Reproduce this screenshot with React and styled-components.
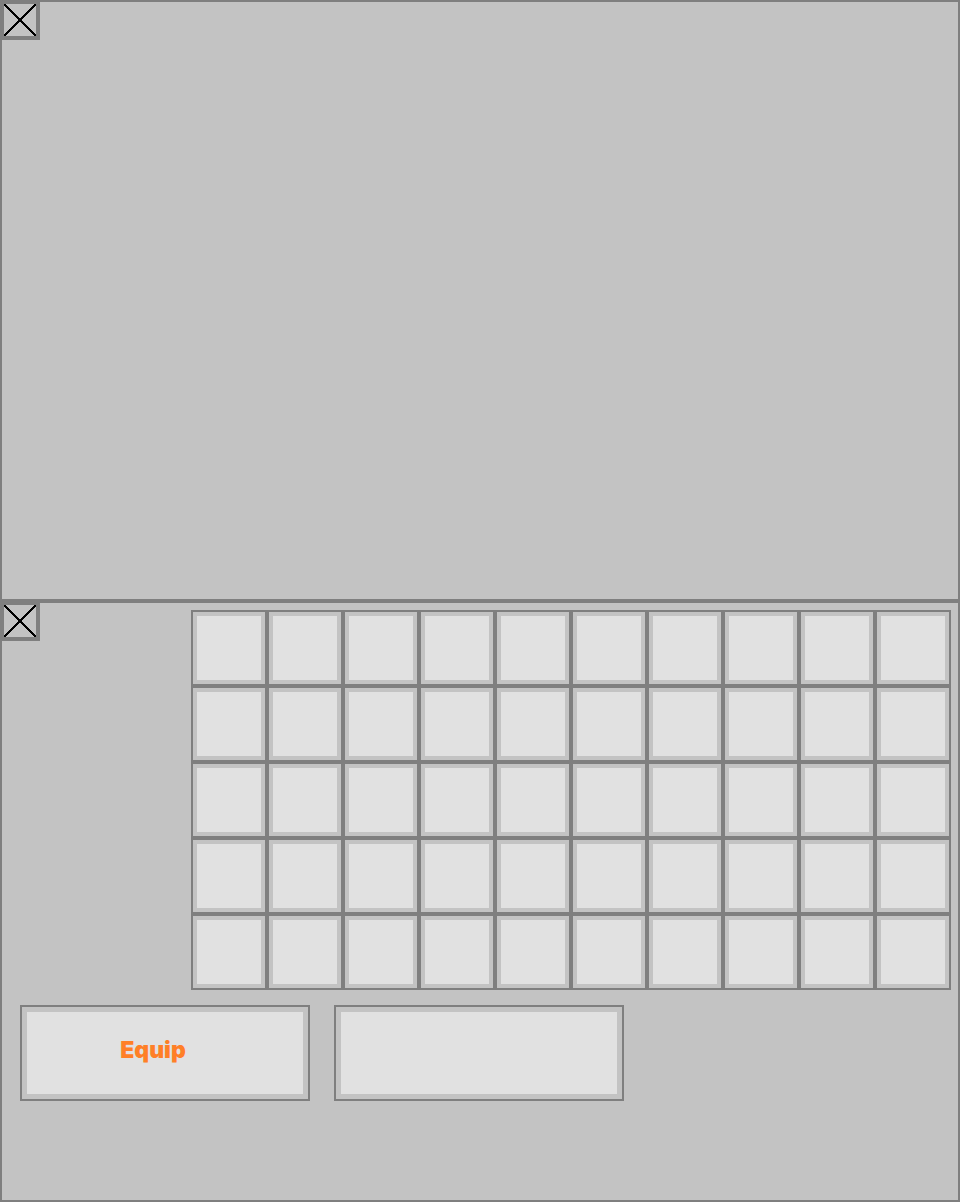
import React from "react";
import styled, { createGlobalStyle } from "styled-components";

const colors = {
  surface: "#c3c3c3",
  line: "#7f7f7f",
  face: "#e1e1e1",
  accent: "#ff7f27",
};

const GlobalStyle = createGlobalStyle`
  *, *::before, *::after { box-sizing: border-box; }
  body {
    margin: 0;
    background: ${colors.surface};
    font-family: "Arial Black", Inter, sans-serif;
  }
`;

const Screen = styled.main`
  display: grid;
  grid-template-rows: 1fr 1fr;
  min-height: 100vh;
`;

const Panel = styled.section`
  display: flex;
  flex-direction: column;
  gap: 15px;
  min-width: 0;
  border: 2px solid ${colors.line};
  background: ${colors.surface};
`;

const PanelTop = styled.div`
  display: flex;
  align-items: flex-start;
  justify-content: space-between;
  gap: 24px;
`;

const CloseButton = styled.button`
  flex: none;
  width: 38px;
  height: 38px;
  padding: 0;
  border: solid ${colors.line};
  border-width: 2px 4px 4px 2px;
  background: ${colors.surface};
  cursor: pointer;

  svg {
    display: block;
    width: 32px;
    height: 32px;
  }
`;

const SlotGrid = styled.div`
  display: grid;
  flex: 0 1 760px;
  grid-template-columns: repeat(10, minmax(0, 1fr));
  margin: 7px 7px 0 0;
`;

const framed = `
  border: 2px solid ${colors.line};
  background: ${colors.face};
  cursor: pointer;
`;

const Slot = styled.button`
  ${framed}
  aspect-ratio: 1;
  padding: 0;
  box-shadow: inset 0 0 0 4px ${colors.surface};
`;

const Actions = styled.div`
  display: flex;
  gap: 24px;
  padding: 0 18px;
`;

const ActionButton = styled.button`
  ${framed}
  flex: 0 1 290px;
  height: 96px;
  padding: 0 24px 6px 0;
  box-shadow: inset 0 0 0 5px ${colors.surface};
  color: ${colors.accent};
  font-family: inherit;
  font-size: 23px;
  font-weight: 900;
  line-height: 30px;
`;

function Close({ label }) {
  return (
    <CloseButton type="button" aria-label={label}>
      <svg viewBox="0 0 32 32" aria-hidden="true">
        <path
          d="M0.5 0.5 31.5 31.5M31.5 0.5 0.5 31.5"
          fill="none"
          stroke="#000"
          strokeWidth="2"
          strokeLinecap="square"
          shapeRendering="crispEdges"
        />
      </svg>
    </CloseButton>
  );
}

const slots = Array.from({ length: 50 }, (_, i) => i + 1);

export default function App() {
  return (
    <>
      <GlobalStyle />
      <Screen>
        <Panel>
          <PanelTop>
            <Close label="Close upper panel" />
          </PanelTop>
        </Panel>
        <Panel>
          <PanelTop>
            <Close label="Close inventory" />
            <SlotGrid>
              {slots.map((n) => (
                <Slot key={n} type="button" aria-label={`Slot ${n}`} />
              ))}
            </SlotGrid>
          </PanelTop>
          <Actions>
            <ActionButton type="button">Equip</ActionButton>
            <ActionButton type="button" aria-label="Empty action" />
          </Actions>
        </Panel>
      </Screen>
    </>
  );
}
